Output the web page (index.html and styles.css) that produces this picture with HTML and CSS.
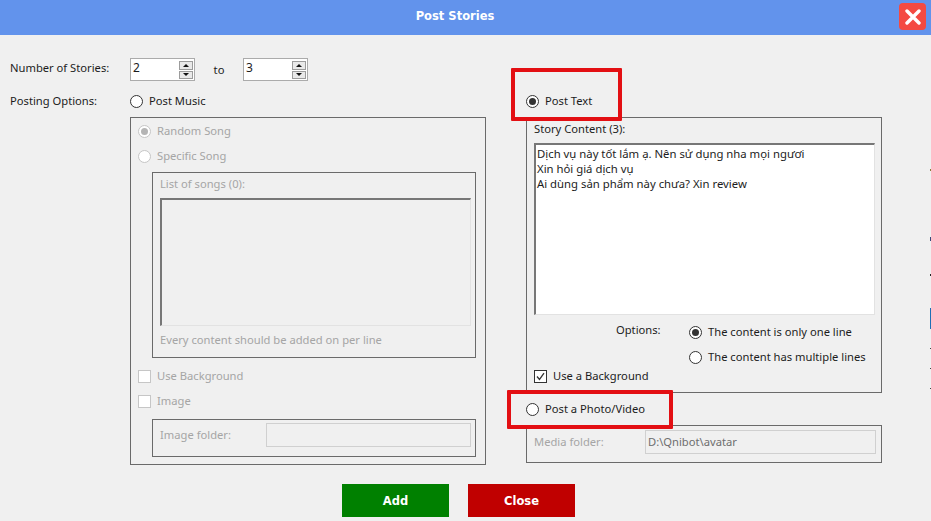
FILE: index.html
```html
<!DOCTYPE html>
<html lang="vi">
<head>
<meta charset="utf-8">
<title>Post Stories</title>
<link rel="stylesheet" href="styles.css">
</head>
<body>
<div class="dialog">
  <header class="titlebar">
    <span class="title">Post Stories</span>
    <button class="close-x" aria-label="Close">
      <svg width="16" height="16" viewBox="0 0 16 16"><path d="M2 2L14 14M14 2L2 14" stroke="#fff" stroke-width="3.4" stroke-linecap="round"/></svg>
    </button>
  </header>

  <main class="content">
    <div class="count-row">
      <span class="label-col">Number of Stories:</span>
      <div class="spin"><span class="spin-val">2</span><span class="spin-btns"><i class="up"></i><i class="down"></i></span></div>
      <span class="to">to</span>
      <div class="spin"><span class="spin-val">3</span><span class="spin-btns"><i class="up"></i><i class="down"></i></span></div>
    </div>

    <div class="options">
      <span class="label-col posting">Posting Options:</span>

      <section class="col music">
        <label class="opt head"><span class="radio"></span>Post Music</label>
        <div class="box music-box disabled">
          <label class="opt"><span class="radio on"></span>Random Song</label>
          <label class="opt specific"><span class="radio"></span>Specific Song</label>
          <div class="box songs">
            <div class="cap">List of songs (0):</div>
            <div class="area song-area"></div>
            <div class="hint">Every content should be added on per line</div>
          </div>
          <label class="opt use-bg"><span class="check"></span>Use Background</label>
          <label class="opt image"><span class="check"></span>Image</label>
          <div class="box folder img-folder">
            <span class="folder-label">Image folder:</span>
            <span class="field"></span>
          </div>
        </div>
      </section>

      <section class="col text">
        <label class="opt head"><span class="radio on"></span>Post Text</label>
        <div class="box text-box">
          <div class="cap story-cap">Story Content (3):</div>
          <div class="area story-area">Dịch vụ này tốt lắm ạ. Nên sử dụng nha mọi ngươi<br>Xin hỏi giá dịch vụ<br>Ai dùng sản phẩm này chưa? Xin review</div>
          <div class="story-opts">
            <span class="opts-label">Options:</span>
            <div class="opts-list">
              <label class="opt"><span class="radio on"></span>The content is only one line</label>
              <label class="opt"><span class="radio"></span>The content has multiple lines</label>
            </div>
          </div>
          <label class="opt story-bg"><span class="check on"><svg width="13" height="13" viewBox="0 0 13 13"><path d="M3 6.5L5.5 9.5L10 3.2" fill="none" stroke="#333" stroke-width="1.3"/></svg></span>Use a Background</label>
        </div>
        <label class="opt photo"><span class="radio"></span>Post a Photo/Video</label>
        <div class="box folder media-folder">
          <span class="folder-label muted">Media folder:</span>
          <span class="field media-field">D:\Qnibot\avatar</span>
        </div>
      </section>
    </div>

    <div class="actions">
      <button class="btn add">Add</button>
      <button class="btn close">Close</button>
    </div>
  </main>

  <div class="mark mark-text"></div>
  <div class="mark mark-photo"></div>
  <div class="edge"></div>
</div>
</body>
</html>
```
FILE: styles.css
```css
* { box-sizing: border-box; }
html, body { margin: 0; padding: 0; }
body {
  width: 931px;
  height: 521px;
  overflow: hidden;
  background: #f0f0f0;
  font-family: "Noto Sans", "Open Sans", sans-serif;
  font-size: 11.2px;
  color: #1c1c1c;
}
.dialog { position: relative; width: 931px; height: 521px; }

.titlebar {
  height: 35px;
  background: #6293ec;
  display: flex;
  align-items: center;
  justify-content: center;
  position: relative;
}
.title {
  font-family: "DejaVu Sans", sans-serif;
  font-weight: 700;
  font-size: 11.5px;
  color: #fff;
  margin: -3px 21px 0 0;
}
.close-x {
  position: absolute;
  left: 899px;
  top: 3px;
  width: 27px;
  height: 27px;
  border: 0;
  padding: 0;
  border-radius: 4px;
  background: #f44a42;
  display: flex;
  align-items: center;
  justify-content: center;
}

.content { padding: 23px 0 0 10px; }

.count-row { display: flex; align-items: flex-start; height: 23px; }
.label-col { width: 120px; flex: none; line-height: 18px; }
.count-row .label-col { margin-top: 1px; }
.to { width: 48px; text-align: center; margin-top: 3px; line-height: 18px; }

.spin {
  width: 65px;
  height: 23px;
  background: #fff;
  border: 1px solid #ababab;
  display: flex;
  justify-content: space-between;
  padding: 1px;
}
.spin-val { padding-left: 1px; line-height: 15px; font-size: 12px; }
.spin-btns { width: 14px; margin-top: 1px; display: flex; flex-direction: column; gap: 1px; }
.spin-btns i {
  height: 9px;
  background: #e9e9e9;
  border: 1px solid #9c9c9c;
  display: flex;
  align-items: center;
  justify-content: center;
}
.spin-btns i::after {
  content: "";
  border-left: 3px solid transparent;
  border-right: 3px solid transparent;
}
.spin-btns .up::after { border-bottom: 3px solid #111; }
.spin-btns .down::after { border-top: 3px solid #111; }

.options { display: flex; margin-top: 8px; align-items: flex-start; }
.posting { margin-top: 3px; }
.col { width: 356px; flex: none; }
.col.text { margin-left: 40px; }

.opt { display: flex; align-items: center; gap: 6px; height: 18px; line-height: 18px; white-space: nowrap; }
.head { margin-top: 3px; margin-bottom: 7px; }

.radio {
  width: 13px;
  height: 13px;
  flex: none;
  border: 1px solid #333;
  border-radius: 50%;
  background: #fff;
  display: flex;
  align-items: center;
  justify-content: center;
}
.radio.on::after {
  content: "";
  width: 7px;
  height: 7px;
  border-radius: 50%;
  background: #333;
}
.check {
  width: 13px;
  height: 13px;
  flex: none;
  border: 1px solid #333;
  background: #fff;
  display: flex;
  align-items: center;
  justify-content: center;
}
.check svg { flex: none; }

.box { border: 1px solid #6a6a6a; }
.disabled { color: #a5a5a5; }
.disabled .radio, .disabled .check { border-color: #c6c6c6; }
.disabled .radio.on::after { background: #b5b5b5; }

.music-box { height: 348px; padding: 4px 9px 0 7px; display: flex; flex-direction: column; }
.specific { margin-top: 7px; }
.songs { margin: 7px 0 0 14px; height: 186px; padding: 2px 4px 0 7px; }
.cap { line-height: 18px; }
.area { border: 2px solid; border-color: #777 #e2e2e2 #e2e2e2 #777; }
.song-area { height: 128px; margin-top: 5px; background: #f0f0f0; border-right-width: 1px; border-bottom-width: 1px; }
.hint { margin-top: 5px; line-height: 18px; }
.use-bg { margin-top: 9px; }
.image { margin-top: 7px; }

.folder { display: flex; align-items: center; }
.img-folder { margin: 9px 0 0 14px; height: 38px; padding: 0 4px 7px 7px; }
.folder-label { width: 106px; flex: none; line-height: 18px; }
.field {
  flex: 1;
  height: 24px;
  border: 1px solid #d0d0d0;
  background: #f0f0f0;
  line-height: 22px;
  padding-left: 2px;
  color: #6e6e6e;
}
.muted { color: #a5a5a5; width: 111px; }

.text-box { height: 276px; padding: 2px 6px 0 7px; position: relative; }
.story-area {
  height: 172px;
  margin-top: 5px;
  background: #fff;
  padding: 1px 0 0 1px;
  line-height: 15px;
  font-size: 11.33px;
  color: #1c1c1c;
  border-right-width: 1px;
  border-bottom-width: 1px;
}
.story-opts { display: flex; margin-top: 6px; padding-left: 82px; }
.opts-label { width: 73px; line-height: 18px; }
.opts-list { display: flex; flex-direction: column; gap: 7px; padding-top: 2px; }
.story-bg { margin-top: 1px; }
.photo { margin-top: 7px; margin-bottom: 7px; }
.media-folder { height: 38px; padding: 0 5px 5px 7px; }

.actions { position: absolute; left: 342px; top: 484px; display: flex; gap: 19px; }
.btn {
  width: 107px;
  height: 33px;
  border: 0;
  padding: 0;
  color: #fff;
  font-family: "DejaVu Sans", sans-serif;
  font-weight: 700;
  font-size: 11.5px;
}
.add { background: #008000; }
.close { background: #c00000; }

.mark { position: absolute; border: 4px solid #e30f13; border-radius: 1px; }
.mark-text { left: 511px; top: 68px; width: 111px; height: 53px; }
.mark-photo { left: 507px; top: 390px; width: 166px; height: 39px; }

.edge {
  position: absolute;
  left: 930px;
  top: 165px;
  width: 1px;
  height: 225px;
  background: linear-gradient(to bottom,
    transparent 4px, #8a7a3a 4px, #8a7a3a 6px, transparent 6px,
    transparent 72px, #3a4a7a 72px, #3a4a7a 76px, transparent 76px,
    transparent 109px, #222 109px, #222 111px, transparent 111px,
    transparent 143px, #1f6fb5 143px, #1f6fb5 164px, transparent 164px,
    transparent 183px, #444 183px, #444 184px, transparent 184px,
    transparent 203px, #444 203px, #444 204px, transparent 204px,
    transparent 223px, #444 223px, #444 224px, transparent 224px);
}
```
